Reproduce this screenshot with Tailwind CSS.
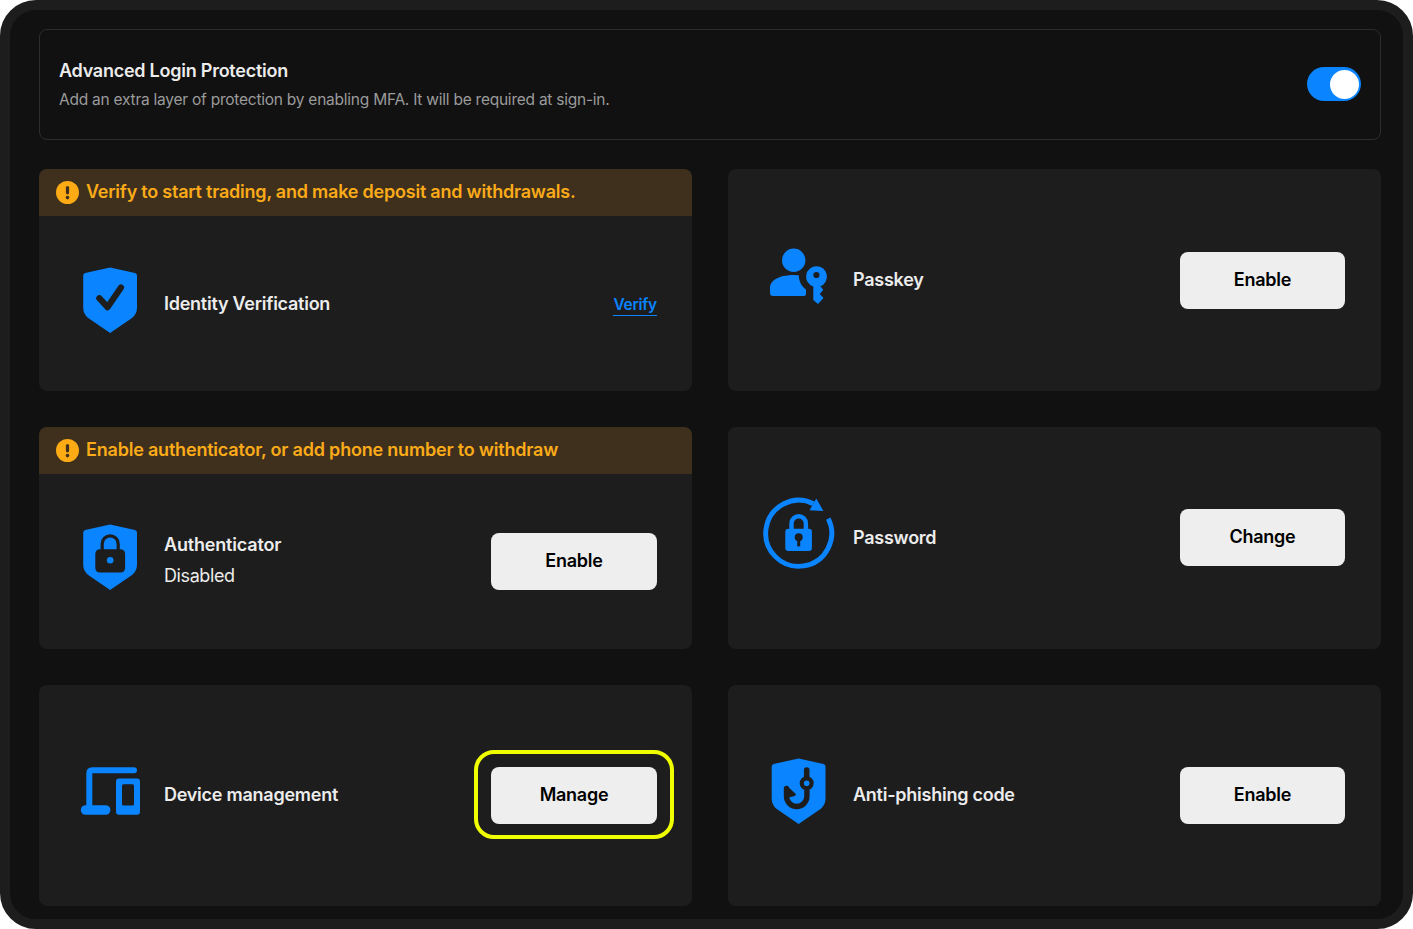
<!DOCTYPE html>
<html lang="en">
<head>
<meta charset="utf-8">
<title>Security settings</title>
<script src="https://cdn.jsdelivr.net/npm/@tailwindcss/browser@4"></script>
</head>
<body class="bg-white">
<svg class="hidden">
  <symbol id="shield" viewBox="0 0 72 72"><path d="M36.1 3.4 L61 9 Q63 9.5 63 11.5 V43.5 Q63 50 58 54 L36.1 69 L14.2 54 Q9.2 50 9.2 43.5 V11.5 Q9.2 9.5 11.2 9 Z" fill="#0a84ff"/></symbol>
  <symbol id="warn" viewBox="0 0 23 23"><circle cx="11.5" cy="11.5" r="11.5" fill="#fdab15"/><path d="M11.5 6.5V11.8" stroke="#3f301e" stroke-width="3.2" stroke-linecap="round"/><circle cx="11.5" cy="16.6" r="1.8" fill="#3f301e"/></symbol>
</svg>
<main class="box-border flex h-[929px] w-[1413px] flex-col rounded-[36px] border-[10px] border-[#1d1d1d] bg-[#111111] pt-[19px] pr-[22px] pl-[29px] font-['Inter','Liberation_Sans',sans-serif] text-[#ececec]">
  <section class="flex h-[111px] shrink-0 items-center justify-between rounded-lg border border-[#2d2d2d] pr-[19px] pl-[19px]">
    <div class="pt-px">
      <h1 class="text-[18px] leading-[26px] font-semibold tracking-[-0.25px]">Advanced Login Protection</h1>
      <p class="mt-1 text-[15.5px] leading-[24px] tracking-[-0.24px] text-[#9b9b9b]">Add an extra layer of protection by enabling MFA. It will be required at sign-in.</p>
    </div>
    <div class="mb-px flex h-[34px] w-[54px] items-center justify-end rounded-full bg-[#0a84ff] pr-[2px]"><span class="size-[29px] rounded-full bg-white"></span></div>
  </section>

  <div class="mt-[29px] grid grid-cols-[653px_653px] grid-rows-[222px_222px_221px] gap-9 text-[18px] font-semibold tracking-[-0.25px]">
    <article class="flex flex-col overflow-hidden rounded-lg bg-[#1d1d1d]">
      <div class="flex h-[47px] shrink-0 items-center gap-[7px] bg-[#3f301e] pl-[17px] text-[#fbab18]"><svg class="size-[23px]"><use href="#warn"/></svg><span class="pb-[2px] tracking-[-0.22px]">Verify to start trading, and make deposit and withdrawals.</span></div>
      <div class="flex grow items-center px-[35px]">
        <svg class="mb-2 size-[72px]" viewBox="0 0 72 72" fill="none"><use href="#shield"/><path d="M25.3 34.2L33.5 43.2L47 23.5" stroke="#1d1d1d" stroke-width="6.2" stroke-linecap="round" stroke-linejoin="round"/></svg>
        <span class="ml-[18px] grow">Identity Verification</span>
        <a class="mt-[3px] border-b border-[#0a84ff] text-[15.5px] leading-[21px] font-semibold tracking-[-0.25px] text-[#0a84ff]">Verify</a>
      </div>
    </article>

    <article class="flex items-center rounded-lg bg-[#1d1d1d] pr-9 pl-[35px]">
      <svg class="mb-2 size-[72px]" viewBox="0 0 72 72" fill="#0a84ff"><circle cx="30.7" cy="20.3" r="11.7"/><path d="M35.7 35.2C36 41 38.5 46.5 43 49.5V54Q43 56 41 56H10Q7 56 7 53V48C7 38.5 20 35 30.5 35Z"/><path fill-rule="evenodd" d="M53.5 26.2A10.4 10.4 0 0 1 57.3 46.3L60.3 49.8L56.8 54L60.5 58L55 64L50.3 60V46.5A10.4 10.4 0 0 1 53.5 26.2ZM53.4 31.9A3.1 3.1 0 1 0 53.4 38.1A3.1 3.1 0 1 0 53.4 31.9Z"/></svg>
      <span class="mb-[2px] ml-[18px] grow">Passkey</span>
      <button class="h-[57px] w-[165px] rounded-lg bg-[#eeeeee] pb-px text-black">Enable</button>
    </article>

    <article class="flex flex-col overflow-hidden rounded-lg bg-[#1d1d1d]">
      <div class="flex h-[47px] shrink-0 items-center gap-[7px] bg-[#3f301e] pl-[17px] text-[#fbab18]"><svg class="size-[23px]"><use href="#warn"/></svg><span class="pb-[2px] tracking-[-0.2px]">Enable authenticator, or add phone number to withdraw</span></div>
      <div class="flex grow items-center px-[35px]">
        <svg class="mb-[9px] size-[72px]" viewBox="0 0 72 72" fill="none"><use href="#shield"/><path d="M28.2 30V22.9A7.9 7.9 0 0 1 44.2 22.9V30" stroke="#1d1d1d" stroke-width="3.2"/><rect x="21.3" y="28.2" width="29.8" height="23.3" rx="4.6" fill="#1d1d1d"/><circle cx="36.2" cy="39.2" r="3.3" fill="#0a84ff"/></svg>
        <div class="mb-[3px] ml-[18px] grow leading-[31px]"><p class="tracking-[-0.18px]">Authenticator</p><p class="font-normal tracking-[-0.4px]">Disabled</p></div>
        <button class="h-[57px] w-[166px] rounded-lg bg-[#eeeeee] pb-[3px] text-black">Enable</button>
      </div>
    </article>

    <article class="flex items-center rounded-lg bg-[#1d1d1d] pr-9 pl-[35px]">
      <svg class="mb-2 size-[72px] overflow-visible" viewBox="0 0 72 72" fill="none"><path d="M65.3 20.7A33 33 0 1 1 50.3 5.7" stroke="#0a84ff" stroke-width="4.9"/><path d="M53.3 .6L60.4 13L46.5 12.3Z" fill="#0a84ff"/><path d="M28.5 32V25.5A7.2 7.2 0 0 1 42.9 25.5V32" stroke="#0a84ff" stroke-width="4.4"/><rect x="22.3" y="30.7" width="26.6" height="22.4" rx="3" fill="#0a84ff"/><circle cx="35.7" cy="39.3" r="4" fill="#1d1d1d"/><path d="M35.7 40V48.4" stroke="#1d1d1d" stroke-width="3"/></svg>
      <span class="mb-[2px] ml-[18px] grow">Password</span>
      <button class="mb-[2px] h-[57px] w-[165px] rounded-lg bg-[#eeeeee] pb-px text-black">Change</button>
    </article>

    <article class="flex items-center rounded-lg bg-[#1d1d1d] px-[35px]">
      <svg class="mb-[9px] size-[72px]" viewBox="0 0 72 72" fill="none"><path d="M60 15.2H18.3Q15.3 15.2 15.3 18.2V52" stroke="#0a84ff" stroke-width="6" stroke-linecap="round"/><rect x="6.8" y="50.2" width="29.6" height="9.6" rx="4.8" fill="#0a84ff"/><path fill-rule="evenodd" fill="#0a84ff" d="M45 23.5H63Q66 23.5 66 26.5V56.8Q66 59.8 63 59.8H45Q42 59.8 42 56.8V26.5Q42 23.5 45 23.5ZM49.5 29.3Q48 29.3 48 30.8V49Q48 50.5 49.5 50.5H58.5Q60 50.5 60 49V30.8Q60 29.3 58.5 29.3Z"/></svg>
      <span class="mb-[3px] ml-[18px] grow">Device management</span>
      <div class="relative">
        <button class="block h-[57px] w-[166px] rounded-lg bg-[#eeeeee] pb-[3px] text-black">Manage</button>
        <span class="absolute -inset-x-[17px] -top-[17px] -bottom-[15px] rounded-[20px] border-4 border-[#f0ff00]"></span>
      </div>
    </article>

    <article class="flex items-center rounded-lg bg-[#1d1d1d] pr-9 pl-[35px]">
      <svg class="mb-[9px] size-[72px]" viewBox="0.5 0 72 72" fill="none"><use href="#shield" width="72" height="72"/><g stroke="#1d1d1d" stroke-linecap="round"><path d="M44.2 15V22" stroke-width="5.6"/><circle cx="44.2" cy="28.2" r="4.9" stroke-width="4.2"/><path d="M44.4 36V41.3A10.2 10.2 0 0 1 24 41.3V33.5" stroke-width="5.4"/><path d="M24.2 32.5L31.8 39.6L26 41Z" fill="#1d1d1d" stroke-width="3" stroke-linejoin="round"/></g></svg>
      <span class="mb-[3px] ml-[18px] grow">Anti-phishing code</span>
      <button class="h-[57px] w-[165px] rounded-lg bg-[#eeeeee] pb-[3px] text-black">Enable</button>
    </article>
  </div>
</main>
</body>
</html>
